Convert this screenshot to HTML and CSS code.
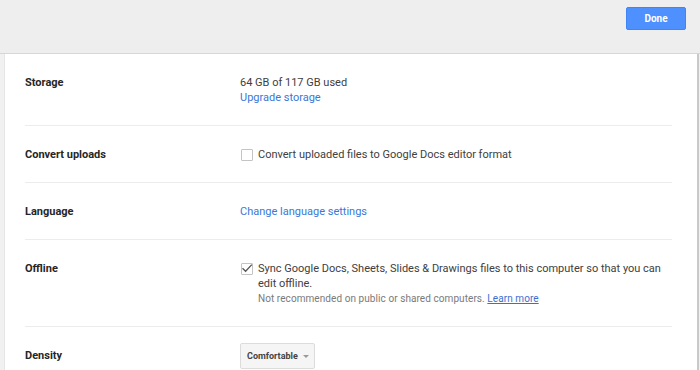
FILE: index.html
```html
<!DOCTYPE html>
<html>
<head>
<meta charset="utf-8">
<link rel="stylesheet" href="styles.css">
</head>
<body>
<div class="header">
  <button class="done">Done</button>
</div>
<div class="panel">
  <div class="row">
    <div class="label">Storage</div>
    <div class="value">
      <div>64 GB of 117 GB used</div>
      <a class="link">Upgrade storage</a>
    </div>
  </div>
  <div class="row">
    <div class="label">Convert uploads</div>
    <div class="value check-line">
      <span class="box"></span>
      <span>Convert uploaded files to Google Docs editor format</span>
    </div>
  </div>
  <div class="row">
    <div class="label">Language</div>
    <div class="value"><a class="link">Change language settings</a></div>
  </div>
  <div class="row">
    <div class="label">Offline</div>
    <div class="value check-line">
      <span class="box checked">
        <svg viewBox="0 0 12 12" width="12" height="12"><path d="M1.5 6.2 L4.6 9.2 L10.8 2.6" fill="none" stroke="#555" stroke-width="1.3"/></svg>
      </span>
      <div>
        <div>Sync Google Docs, Sheets, Slides &amp; Drawings files to this computer so that you can edit offline.</div>
        <div class="note">Not recommended on public or shared computers. <a class="learn">Learn more</a></div>
      </div>
    </div>
  </div>
  <div class="row density">
    <div class="label">Density</div>
    <div class="value">
      <div class="dropdown"><span>Comfortable</span><span class="arrow"></span></div>
    </div>
  </div>
</div>
</body>
</html>
```
FILE: styles.css
```css
html, body {
  margin: 0;
  padding: 0;
  height: 100%;
  overflow: hidden;
}
body {
  font-family: Roboto, Arial, sans-serif;
  font-size: 11px;
  color: #333;
  background: #f1f1f1;
}
.header {
  height: 54px;
  background: #eeeeee;
  border-bottom: 1px solid #d6d6d6;
  display: flex;
  justify-content: flex-end;
  align-items: flex-start;
  padding: 7px 14px 0 0;
  box-sizing: border-box;
}
.done {
  width: 60px;
  height: 23px;
  background: #4d90fe;
  border: 1px solid #3f85f5;
  border-radius: 2px;
  color: #fff;
  font-family: Roboto, Arial, sans-serif;
  font-weight: bold;
  font-size: 10px;
  padding: 0;
}
.panel {
  margin: 0 1px 0 4px;
  background: #fff;
  border-left: 1px solid #e6e6e6;
  border-right: 2px solid #c9c9c9;
  padding: 0 25px 0 20px;
  height: 316px;
  overflow: hidden;
}
.row {
  display: flex;
  padding: 21px 0 20px;
  border-bottom: 1px solid #ececec;
  line-height: 15px;
}
.row.density {
  padding-top: 16px;
  border-bottom: none;
}
.label {
  width: 215px;
  flex: none;
  font-weight: bold;
  color: #262626;
}
.density .label {
  padding-top: 5px;
}
.value {
  color: #404040;
  flex: 1;
}
.link {
  color: #3a77d8;
  text-decoration: none;
}
.check-line {
  display: flex;
  align-items: flex-start;
  padding-left: 1px;
}
.box {
  width: 10px;
  height: 10px;
  border: 1px solid #c4c4c4;
  border-radius: 1px;
  flex: none;
  margin: 2px 5px 0 0;
  position: relative;
  background: #fff;
}
.box svg {
  position: absolute;
  left: -1px;
  top: -2px;
}
.note {
  color: #7a7a7a;
  font-size: 10px;
  letter-spacing: 0.07px;
}
.learn {
  color: #3a6fd0;
  text-decoration: underline;
}
.dropdown {
  display: inline-flex;
  align-items: center;
  height: 26px;
  box-sizing: border-box;
  padding: 0 5px 0 6px;
  background: #f5f5f5;
  border: 1px solid #dcdcdc;
  border-radius: 2px;
  font-weight: bold;
  font-size: 9px;
  color: #444;
}
.arrow {
  width: 0;
  height: 0;
  border-left: 3px solid transparent;
  border-right: 3px solid transparent;
  border-top: 3px solid #999;
  margin-left: 5px;
}
```
